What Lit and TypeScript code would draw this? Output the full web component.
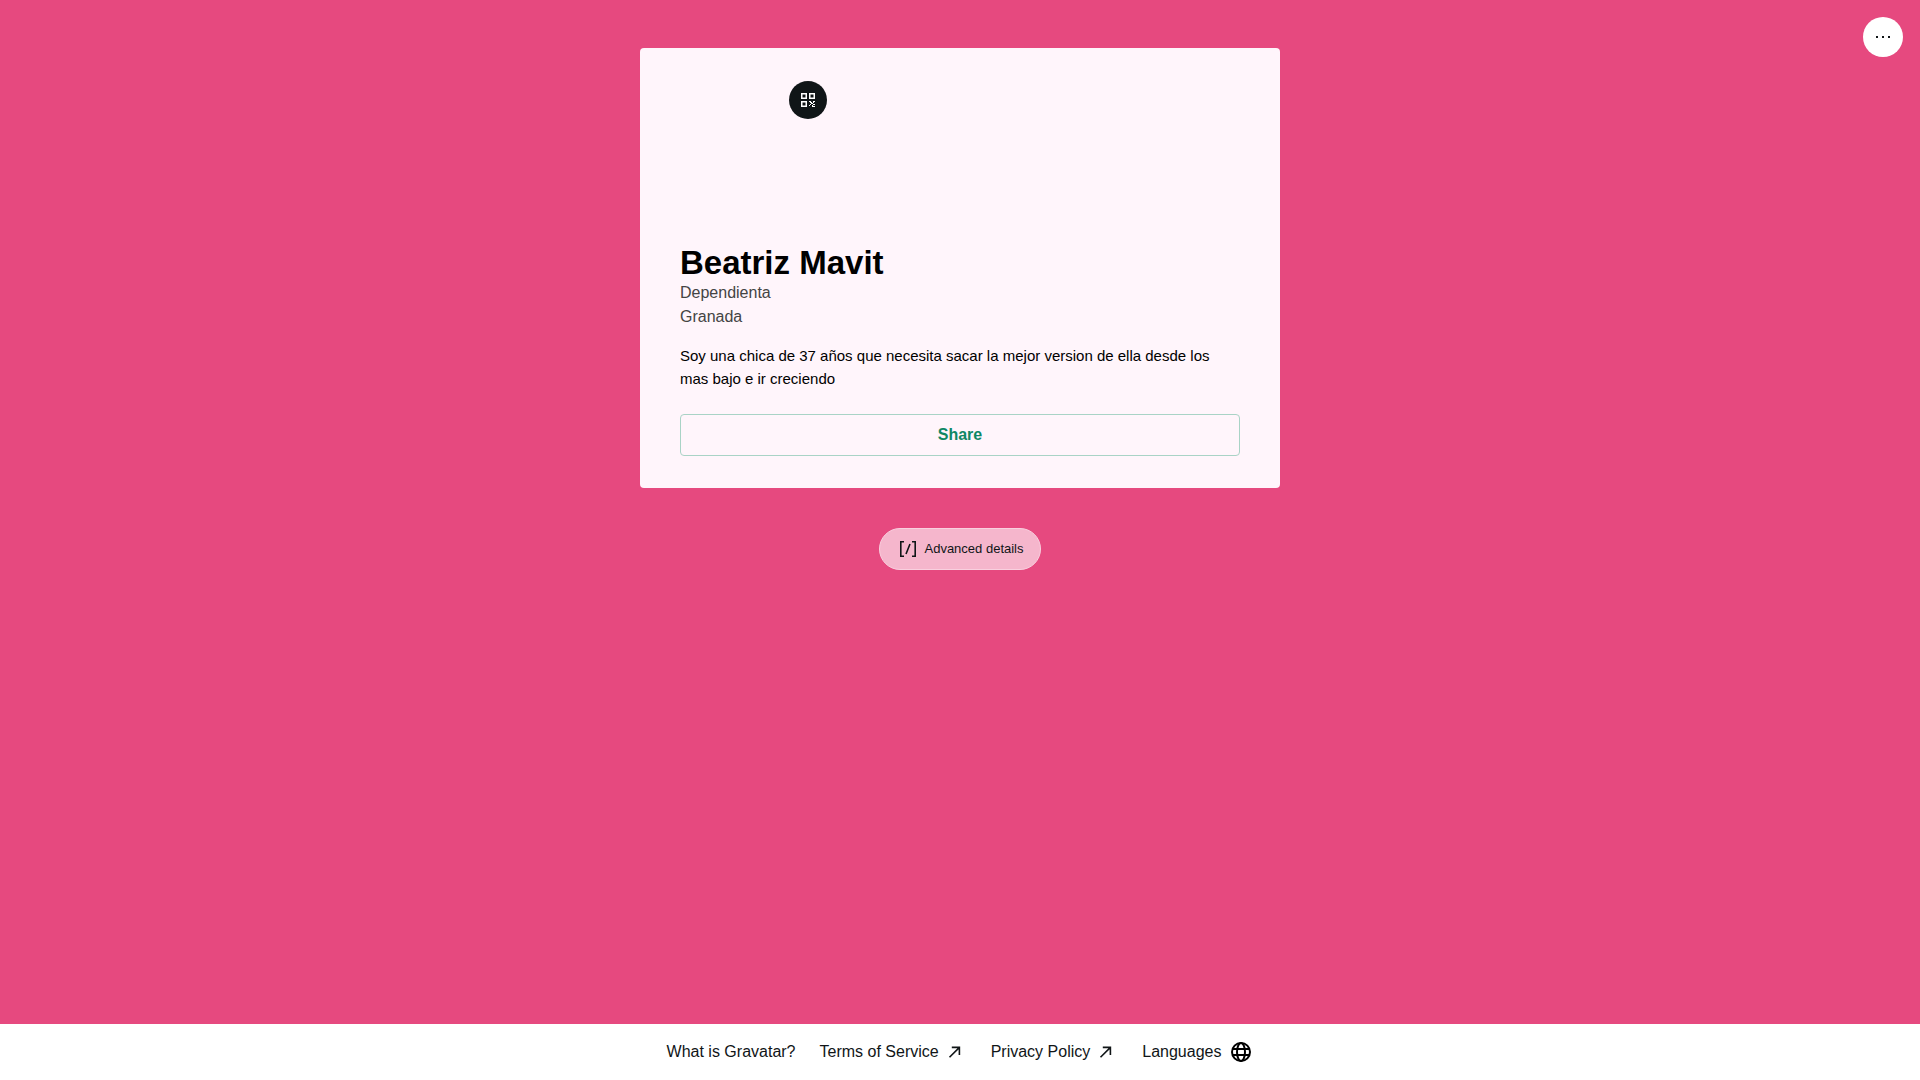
import { LitElement, html, css, svg } from "lit";
import { customElement } from "lit/decorators.js";

const arrow = html`<svg class="arrow" viewBox="0 0 24 24" aria-hidden="true">
  <path d="M6.5 17.3 16.2 7.6M8.8 7.4H16.4V15" fill="none" stroke="currentColor" stroke-width="1.6" />
</svg>`;

const finder = (x: number, y: number) => svg`
  <rect x=${x + 0.75} y=${y + 0.75} width="4.5" height="4.5" fill="none" stroke="currentColor" stroke-width="1.5" />`;

@customElement("app-root")
export class AppRoot extends LitElement {
  static styles = css`
    :host {
      display: block;
      font-family: "Liberation Sans", Arial, sans-serif;
      font-size: 16px;
      line-height: 24px;
      color: #101517;
    }
    * {
      box-sizing: border-box;
    }
    button {
      font: inherit;
      color: inherit;
      cursor: pointer;
    }
    svg {
      display: block;
      flex: none;
    }
    .page {
      position: relative;
      display: flex;
      flex-direction: column;
      min-height: 100vh;
      background: #e6497f;
    }
    .menu {
      position: absolute;
      top: 17px;
      right: 17px;
      display: grid;
      place-items: center;
      width: 40px;
      height: 40px;
      padding: 0;
      border: 0;
      border-radius: 50%;
      background: #fff;
    }
    main {
      flex: 1;
      display: flex;
      flex-direction: column;
      align-items: center;
      gap: 40px;
      padding: 48px 16px;
    }
    .card {
      width: 100%;
      max-width: 640px;
      padding: 40px 40px 32px;
      border-radius: 4px;
      background: #fff5fb;
      color: #000;
    }
    .avatar {
      position: relative;
      width: 128px;
      height: 128px;
      margin-bottom: 29px;
    }
    .qr {
      position: absolute;
      top: -7px;
      right: -19px;
      display: grid;
      place-items: center;
      width: 38px;
      height: 38px;
      padding: 0;
      border: 0;
      border-radius: 50%;
      background: #101517;
      color: #fff;
    }
    h1 {
      margin: 0;
      font-size: 33px;
      line-height: 36px;
      font-weight: 700;
    }
    .meta {
      margin: 0;
      color: #444;
    }
    .bio {
      margin: 15px 0 24px;
      font-size: 15px;
      line-height: 23px;
    }
    .share {
      display: block;
      width: 100%;
      height: 42px;
      border: 1px solid #a9d3c6;
      border-radius: 4px;
      background: transparent;
      color: #0e8764;
      font-weight: 700;
    }
    .details {
      display: flex;
      align-items: center;
      gap: 4px;
      height: 42px;
      padding: 0 16px;
      border: 1px solid #f9d0df;
      border-radius: 21px;
      background: #f5b6cc;
      font-size: 13px;
    }
    footer {
      background: #fff;
    }
    nav {
      display: flex;
      flex-wrap: wrap;
      justify-content: center;
      gap: 8px 24px;
      padding: 16px;
    }
    .link {
      display: flex;
      align-items: center;
      gap: 4px;
      padding: 0;
      border: 0;
      background: none;
      color: inherit;
      text-decoration: none;
    }
    .languages {
      gap: 8px;
    }
    .arrow,
    .globe {
      width: 24px;
      height: 24px;
    }
    .globe {
      color: #000;
    }
  `;

  render() {
    return html`
      <div class="page">
        <main>
          <article class="card">
            <div class="avatar">
              <button class="qr" aria-label="QR code">
                <svg width="14" height="14" viewBox="0 0 14 14">
                  ${finder(0, 0)} ${finder(8, 0)} ${finder(0, 8)}
                  <path
                    d="M8 8h2v1h1v1h-2v-1H8zM12 8h2v1h-1v1h-1zM10 10h2v1h-2zM12 11h2v1h-2zM8 12h1v-1h1v1h-1v1H8zM11 12h1v1h2v1h-3z"
                    fill="currentColor"
                  />
                </svg>
              </button>
            </div>
            <h1>Beatriz Mavit</h1>
            <p class="meta">Dependienta</p>
            <p class="meta">Granada</p>
            <p class="bio">
              Soy una chica de 37 años que necesita sacar la mejor version de ella desde los mas bajo e ir creciendo
            </p>
            <button class="share">Share</button>
          </article>
          <button class="details">
            <svg width="24" height="24" viewBox="0 0 24 24" aria-hidden="true">
              <path d="M8 4.8H4.8v14.4H8M16 4.8h3.2v14.4H16M14 7l-4 10" fill="none" stroke="currentColor" stroke-width="1.6" />
            </svg>
            Advanced details
          </button>
        </main>
        <button class="menu" aria-label="More options">
          <svg width="24" height="24" viewBox="0 0 24 24" fill="currentColor">
            <path d="M5 11h2v2H5zM11 11h2v2h-2zM17 11h2v2h-2z" />
          </svg>
        </button>
        <footer>
          <nav>
            <a class="link" href="#about">What is Gravatar?</a>
            <a class="link" href="#terms">Terms of Service ${arrow}</a>
            <a class="link" href="#privacy">Privacy Policy ${arrow}</a>
            <button class="link languages">
              Languages
              <svg class="globe" viewBox="0 0 24 24" fill="none" stroke="currentColor" stroke-width="2" aria-hidden="true">
                <circle cx="12" cy="12" r="9" />
                <ellipse cx="12" cy="12" rx="4" ry="9" />
                <path d="M3.5 9h17M3.5 15h17" />
              </svg>
            </button>
          </nav>
        </footer>
      </div>
    `;
  }
}
